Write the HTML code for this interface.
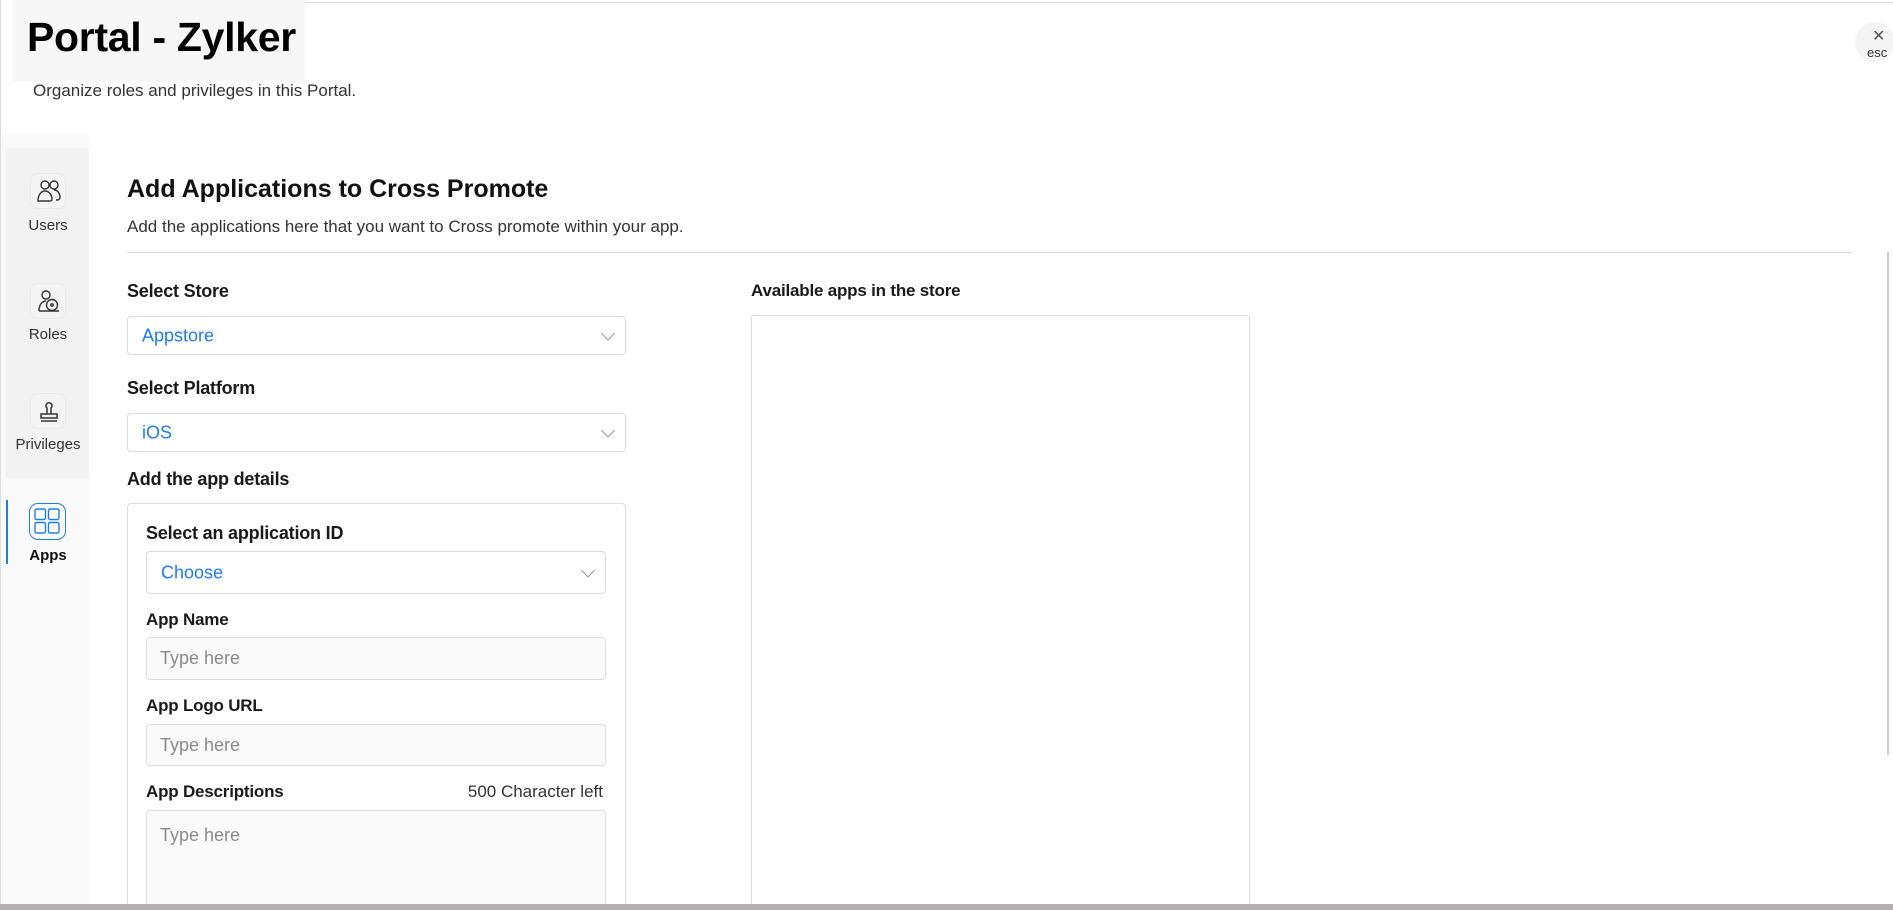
<!DOCTYPE html>
<html><head><meta charset="utf-8"><style>
*{box-sizing:border-box;margin:0;padding:0}
html,body{width:1893px;height:910px;overflow:hidden}
body{background:#fff;font-family:"Liberation Sans",sans-serif;color:#111;position:relative}
.a{position:absolute}
.lbl{position:absolute;font-size:18px;font-weight:bold;color:#1a1a1a;letter-spacing:-0.2px}
.sel{position:absolute;border:1px solid #dcdcdc;border-radius:4px;background:#fff}
.sel span{position:absolute;left:14px;top:50%;transform:translateY(-50%);color:#1e7cf2;font-size:18px}
.chev{position:absolute;right:12px;top:50%;width:10px;height:10px;border-right:1.3px solid #999;border-bottom:1.3px solid #999;transform:translateY(-75%) rotate(45deg)}
.inp{position:absolute;border:1px solid #dcdcdc;border-radius:4px;background:#fafafa;color:#8a8a8a;font-size:18px;padding-left:13px}
.ib{position:absolute;left:30px;width:36px;height:36px;border-radius:8px;background:#f4f4f4;border:1px solid #eaeaea}
.nl{position:absolute;left:0;width:96px;text-align:center;font-size:15px;color:#333}
</style></head><body>
<div class="a" style="left:0;top:0;width:1px;height:904px;background:#ddd"></div>
<div class="a" style="left:300px;top:2px;width:1593px;height:1px;background:#ddd"></div>
<div class="a" style="left:13px;top:0;width:292px;height:81px;background:#f7f7f7"></div>
<div class="a" style="left:27px;top:14px;font-size:41px;font-weight:bold;color:#000;letter-spacing:-0.3px">Portal - Zylker</div>
<div class="a" style="left:33px;top:81px;font-size:17px;color:#333">Organize roles and privileges in this Portal.</div>
<div class="a" style="left:1855px;top:22px;width:40px;height:40px;border-radius:20px;background:#f4f4f4"></div>
<div class="a" style="left:1872px;top:26px;font-size:16px;color:#555">✕</div>
<div class="a" style="left:1867px;top:45px;font-size:13px;color:#333">esc</div>

<div class="a" style="left:1px;top:135px;width:88px;height:769px;background:#f9f9f9"></div>
<div class="a" style="left:6px;top:148px;width:83px;height:330px;background:#f2f2f2;border-radius:6px 0 0 0"></div>
<div class="ib" style="top:173px"><svg width="36" height="36" viewBox="0 0 36 36" fill="none" stroke="#333" stroke-width="1.4"><circle cx="14" cy="11" r="4"/><circle cx="23" cy="11" r="4"/><path d="M7 27c0-6 3-10 7-10s7 4 7 8c0 2-1 2-3 2z"/><path d="M23 16c4 0 6 4 6 7s-2 3-4 3"/></svg></div>
<div class="nl" style="top:217px">Users</div>
<div class="ib" style="top:283px"><svg width="36" height="36" viewBox="0 0 36 36" fill="none" stroke="#333" stroke-width="1.4"><circle cx="15" cy="11" r="4"/><path d="M8 27c0-6 3-10 7-10"/><circle cx="21" cy="21" r="5.5"/><circle cx="21" cy="21" r="1.2"/><path d="M8 27h20"/></svg></div>
<div class="nl" style="top:326px">Roles</div>
<div class="ib" style="top:393px"><svg width="36" height="36" viewBox="0 0 36 36" fill="none" stroke="#333" stroke-width="1.5"><path d="M16 20v-6a3 3 0 1 1 4 0v6"/><path d="M10 20h16v4H10z"/><path d="M10 27h16"/></svg></div>
<div class="nl" style="top:436px">Privileges</div>
<div class="a" style="left:6px;top:500px;width:1.5px;height:64px;background:#1e7cf2"></div>
<div class="a" style="left:29px;top:503px;width:37px;height:37px;border-radius:9px;border:1.5px solid #1e7cf2;background:#fff"><svg width="34" height="34" viewBox="0 0 34 34" fill="none" stroke="#1e7cf2" stroke-width="1.4"><rect x="5" y="5" width="10.5" height="10.5" rx="1.5"/><rect x="18.5" y="5" width="10.5" height="10.5" rx="1.5"/><rect x="5" y="18.5" width="10.5" height="10.5" rx="1.5"/><rect x="18.5" y="18.5" width="10.5" height="10.5" rx="1.5"/></svg></div>
<div class="nl" style="top:547px;font-weight:bold;color:#111">Apps</div>

<div class="a" style="left:127px;top:175px;font-size:25px;font-weight:bold;color:#111">Add Applications to Cross Promote</div>
<div class="a" style="left:127px;top:217px;font-size:17px;color:#333">Add the applications here that you want to Cross promote within your app.</div>
<div class="a" style="left:127px;top:252px;width:1725px;height:1px;background:#d8d8d8"></div>
<div class="a" style="left:1887px;top:252px;width:2px;height:503px;background:#ccc"></div>

<div class="lbl" style="left:127px;top:281px">Select Store</div>
<div class="sel" style="left:127px;top:316px;width:499px;height:39px"><span>Appstore</span><i class="chev"></i></div>
<div class="lbl" style="left:127px;top:378px">Select Platform</div>
<div class="sel" style="left:127px;top:413px;width:499px;height:39px"><span>iOS</span><i class="chev"></i></div>
<div class="lbl" style="left:127px;top:469px">Add the app details</div>
<div class="a" style="left:127px;top:503px;width:499px;height:401px;border:1px solid #ddd;border-bottom:none;border-radius:4px 4px 0 0"></div>
<div class="lbl" style="left:146px;top:523px">Select an application ID</div>
<div class="sel" style="left:146px;top:551px;width:460px;height:43px"><span>Choose</span><i class="chev"></i></div>
<div class="lbl" style="left:146px;top:610px;font-size:17px">App Name</div>
<div class="inp" style="left:146px;top:637px;width:460px;height:43px;line-height:41px">Type here</div>
<div class="lbl" style="left:146px;top:696px;font-size:17px">App Logo URL</div>
<div class="inp" style="left:146px;top:724px;width:460px;height:42px;line-height:40px">Type here</div>
<div class="lbl" style="left:146px;top:782px;font-size:17px">App Descriptions</div>
<div class="a" style="left:400px;top:782px;width:203px;text-align:right;font-size:17px;color:#333">500 Character left</div>
<div class="inp" style="left:146px;top:810px;width:460px;height:94px;padding-top:14px;border-bottom:none;border-radius:4px 4px 0 0">Type here</div>

<div class="lbl" style="left:751px;top:281px;font-size:17px">Available apps in the store</div>
<div class="a" style="left:751px;top:315px;width:499px;height:589px;border:1px solid #ddd;border-bottom:none;border-radius:3px 3px 0 0"></div>
<div class="a" style="left:0;top:904px;width:1893px;height:6px;background:#b5aeae"></div>
</body></html>
